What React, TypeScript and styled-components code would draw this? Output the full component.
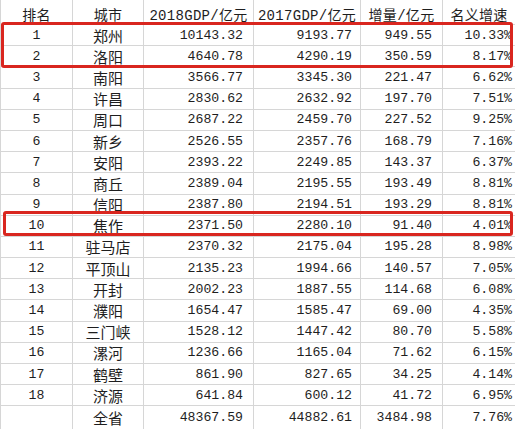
import styled, { createGlobalStyle } from 'styled-components';

const GlobalStyle = createGlobalStyle`
  body {
    margin: 0;
    background: #ffffff;
  }
`;

const HEAD_H = 25;
const ROW_H = 21.2;

type Row = [string, string, string, string, string, string];

const rows: Row[] = [
  ['1', '郑州', '10143.32', '9193.77', '949.55', '10.33%'],
  ['2', '洛阳', '4640.78', '4290.19', '350.59', '8.17%'],
  ['3', '南阳', '3566.77', '3345.30', '221.47', '6.62%'],
  ['4', '许昌', '2830.62', '2632.92', '197.70', '7.51%'],
  ['5', '周口', '2687.22', '2459.70', '227.52', '9.25%'],
  ['6', '新乡', '2526.55', '2357.76', '168.79', '7.16%'],
  ['7', '安阳', '2393.22', '2249.85', '143.37', '6.37%'],
  ['8', '商丘', '2389.04', '2195.55', '193.49', '8.81%'],
  ['9', '信阳', '2387.80', '2194.51', '193.29', '8.81%'],
  ['10', '焦作', '2371.50', '2280.10', '91.40', '4.01%'],
  ['11', '驻马店', '2370.32', '2175.04', '195.28', '8.98%'],
  ['12', '平顶山', '2135.23', '1994.66', '140.57', '7.05%'],
  ['13', '开封', '2002.23', '1887.55', '114.68', '6.08%'],
  ['14', '濮阳', '1654.47', '1585.47', '69.00', '4.35%'],
  ['15', '三门峡', '1528.12', '1447.42', '80.70', '5.58%'],
  ['16', '漯河', '1236.66', '1165.04', '71.62', '6.15%'],
  ['17', '鹤壁', '861.90', '827.65', '34.25', '4.14%'],
  ['18', '济源', '641.84', '600.12', '41.72', '6.95%'],
  ['', '全省', '48367.59', '44882.61', '3484.98', '7.76%'],
];

const headers = ['排名', '城市', '2018GDP/亿元', '2017GDP/亿元', '增量/亿元', '名义增速'];
const padRight = [0, 0, 10, 8, 10, 3];

// rows wrapped by a red marker: [first row index, last row index, left, top shift]
const marks = [
  { from: 0, to: 1, left: 1, shiftTop: -3, shiftBottom: 1 },
  { from: 9, to: 9, left: 3, shiftTop: -5, shiftBottom: -1 },
];

const App = (): React.ReactElement => {
  return (
    <Sheet>
      <GlobalStyle />
      <Grid>
        {headers.map(h => (
          <HeadCell key={h}>{h}</HeadCell>
        ))}
        {rows.map((row, r) =>
          row.map((value, c) => (
            <Cell
              key={`${r}-${c}`}
              $numeric={c >= 2}
              $cjk={c === 1}
              $pad={padRight[c]}
              $last={r === rows.length - 1}
            >
              {value}
            </Cell>
          )),
        )}
      </Grid>
      {marks.map(m => (
        <Marker
          key={m.from}
          $left={m.left}
          $top={HEAD_H + m.from * ROW_H + m.shiftTop}
          $height={(m.to - m.from + 1) * ROW_H - m.shiftTop + m.shiftBottom}
        />
      ))}
    </Sheet>
  );
};

export default App;

const Sheet = styled.div`
  position: relative;
  width: 515px;
  height: 429px;
  overflow: hidden;
  background: #ffffff;
  font-family: 'Liberation Mono', 'Noto Sans CJK SC', monospace;
  color: #1e1e1e;
`;

const Grid = styled.div`
  display: grid;
  grid-template-columns: 72px 71px 110px 107px 82px 73px;
  grid-template-rows: ${HEAD_H}px repeat(18, ${ROW_H}px) 1fr;
  height: 429px;
  border-left: 1px solid #d6d6d6;
  box-sizing: border-box;
`;

const HeadCell = styled.div`
  display: flex;
  align-items: center;
  justify-content: center;
  padding-top: 3px;
  border-right: 1px solid #d6d6d6;
  border-bottom: 1px solid #d6d6d6;
  font-size: 14px;
  font-family: 'Liberation Mono', 'Noto Sans CJK SC', monospace;
  white-space: nowrap;
  letter-spacing: 0.3px;
`;

const Cell = styled.div<{ $numeric: boolean; $cjk: boolean; $pad: number; $last: boolean }>`
  display: flex;
  align-items: center;
  justify-content: ${p => (p.$numeric ? 'flex-end' : 'center')};
  padding-right: ${p => p.$pad}px;
  border-right: 1px solid #d6d6d6;
  border-bottom: ${p => (p.$last ? 'none' : '1px solid #d6d6d6')};
  font-size: ${p => (p.$cjk ? '15px' : '13.2px')};
  font-family: ${p =>
    p.$cjk
      ? "'Noto Sans CJK SC', sans-serif"
      : "'Liberation Mono', monospace"};
  white-space: nowrap;
`;

const Marker = styled.div<{ $left: number; $top: number; $height: number }>`
  position: absolute;
  left: ${p => p.$left}px;
  right: 2px;
  top: ${p => p.$top}px;
  height: ${p => p.$height}px;
  border: 3px solid #d9261f;
  border-radius: 3px;
  box-sizing: border-box;
  pointer-events: none;
`;
